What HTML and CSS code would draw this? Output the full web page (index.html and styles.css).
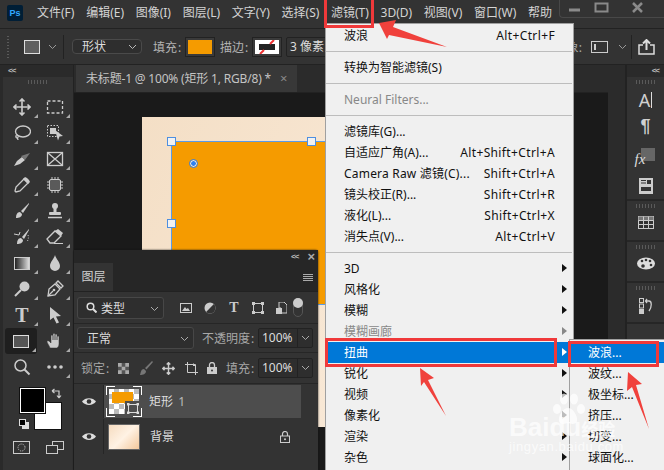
FILE: index.html
```html
<!DOCTYPE html>
<html lang="zh">
<head>
<meta charset="utf-8">
<title>Photoshop</title>
<link rel="stylesheet" href="styles.css">
</head>
<body>
<div class="app">
  <header class="menubar">
    <div class="pslogo">Ps</div>
    <nav class="menus">
      <span>文件(F)</span><span>编辑(E)</span><span>图像(I)</span><span>图层(L)</span><span>文字(Y)</span><span>选择(S)</span><span>滤镜(T)</span><span>3D(D)</span><span>视图(V)</span><span>窗口(W)</span><span>帮助</span>
    </nav>
    <div class="winbtns">
      <svg width="105" height="18" viewBox="0 0 105 18"><path d="M10 11h11" stroke="#8a8a8a" stroke-width="3"/><rect x="36.500" y="4.500" width="12" height="8" fill="none" stroke="#8a8a8a" stroke-width="2"/><path d="M74 4l9 9M83 4l-9 9" stroke="#8a8a8a" stroke-width="2.500"/></svg>
    </div>
  </header>

  <div class="options">
    <div class="grip-v"></div>
    <div class="tool-preset"></div>
    <svg class="chev" width="9" height="6" viewBox="0 0 9 6"><path d="M1 1l3.500 3.500L8 1" fill="none" stroke="#9a9a9a"/></svg>
    <div class="opt-div"></div>
    <div class="opt-select">形状<svg width="9" height="6" viewBox="0 0 9 6"><path d="M1 1l3.500 3.500L8 1" fill="none" stroke="#bbb"/></svg></div>
    <div class="opt-label">填充 :</div>
    <div class="swatch"><i class="fill-orange"></i></div>
    <div class="opt-label">描边 :</div>
    <div class="swatch"><svg width="24" height="14" viewBox="0 0 24 14"><rect width="24" height="14" fill="#fff"/><rect x="4" y="4" width="16" height="6" fill="#222"/><path d="M15 4l4-4M5 14l4-4" stroke="#e33" stroke-width="2"/></svg></div>
    <div class="opt-stroke">3 像素</div>
    <div class="opt-right">
      <span class="opt-frag">象:</span>
      <svg width="17" height="12" viewBox="0 0 17 12"><rect x=".5" y=".5" width="16" height="11" fill="none" stroke="#ccc"/><path d="M4 3v6" stroke="#ccc" stroke-width="2"/></svg>
      <svg class="chev2" width="9" height="6" viewBox="0 0 9 6"><path d="M1 1l3.500 3.500L8 1" fill="none" stroke="#9a9a9a"/></svg>
      <div class="opt-div"></div>
      <svg width="17" height="16" viewBox="0 0 17 16"><path d="M5 6H1v9h15V6h-4" fill="none" stroke="#ddd" stroke-width="1.500"/><path d="M8.500 11V1M5 4.500L8.500 1 12 4.500" fill="none" stroke="#ddd" stroke-width="2"/></svg>
    </div>
  </div>

  <div class="workspace">
    <aside class="toolbar">
      <div class="collapse-bar"><span>&lt;&lt;</span></div>
      <div class="grip-h"></div>
      <div class="tools">
        <div class="tool fly"><svg viewBox="0 0 18 18"><path d="M9 1v16M1 9h16M6.500 3.500L9 1l2.500 2.500M6.500 14.500L9 17l2.500-2.500M3.500 6.500L1 9l2.500 2.500M14.500 6.500L17 9l-2.500 2.500" fill="none" stroke="#ccc" stroke-width="1.600"/></svg></div>
        <div class="tool fly"><svg viewBox="0 0 18 18"><rect x="1.500" y="3" width="15" height="12" fill="none" stroke="#ccc" stroke-width="1.300" stroke-dasharray="3 2"/></svg></div>
        <div class="tool fly"><svg viewBox="0 0 18 18"><ellipse cx="10" cy="7.500" rx="7.500" ry="5.500" fill="none" stroke="#ccc" stroke-width="1.300"/><path d="M4 12c-1 2 1 2 1 4" fill="none" stroke="#ccc" stroke-width="1.300"/><circle cx="4" cy="12.500" r="1.500" fill="none" stroke="#ccc"/></svg></div>
        <div class="tool fly"><svg viewBox="0 0 18 18"><rect x="1.500" y="1.500" width="11" height="11" fill="none" stroke="#ccc" stroke-dasharray="1.500 1.500"/><rect x="4" y="4" width="6" height="6" fill="#ccc"/><path d="M9 6l8 6-3.500 .5-1.500 4z" fill="#ccc"/></svg></div>
        <div class="tool fly"><svg viewBox="0 0 18 18"><path d="M1 16l3-5 5-4 3 3-5 4z" fill="#ccc"/><path d="M8 6l9-3-5 7z" fill="#777"/></svg></div>
        <div class="tool fly"><svg viewBox="0 0 18 18"><rect x="1.500" y="2.500" width="15" height="13" fill="none" stroke="#ccc" stroke-width="1.300"/><path d="M2 3l14 12M16 3L2 15" stroke="#ccc" stroke-width="1.300"/></svg></div>
        <div class="tool fly"><svg viewBox="0 0 18 18"><path d="M11 3l4 4-8 8-4 1-1-1 1-4z" fill="none" stroke="#ccc" stroke-width="1.300"/><path d="M10 3l2-2 2 1 2 2 1 2-2 2z" fill="#ccc"/></svg></div>
        <div class="tool fly"><svg viewBox="0 0 18 18"><rect x="3.500" y="3.500" width="11" height="11" rx="1.500" fill="#5a5a5a" stroke="#ccc"/><path d="M6 1v2M9 1v2M12 1v2M6 15v2M9 15v2M12 15v2M1 6h2M1 9h2M1 12h2M15 6h2M15 9h2M15 12h2" stroke="#ccc"/></svg></div>
        <div class="tool fly"><svg viewBox="0 0 18 18"><path d="M16 1L8 9l2 2 6-9z" fill="#ccc"/><path d="M7 10c-3 0-4 3-4 6 3 0 6-1 6-4z" fill="#ccc"/></svg></div>
        <div class="tool fly"><svg viewBox="0 0 18 18"><circle cx="9" cy="4" r="3" fill="#ccc"/><rect x="7.500" y="6" width="3" height="4" fill="#ccc"/><rect x="3" y="10" width="12" height="3" rx="1" fill="#ccc"/><path d="M2 15.500h14" stroke="#ccc" stroke-width="1.500"/></svg></div>
        <div class="tool fly"><svg viewBox="0 0 18 18"><path d="M16 1L9 9l2 2 5-9z" fill="#ccc"/><path d="M8 10c-3 0-4 3-4 6 3 0 6-1 6-4z" fill="#ccc"/><path d="M1 6l5 1 1-3" fill="none" stroke="#ccc"/><path d="M15 7c1 3 0 5-1 7" fill="none" stroke="#ccc" stroke-dasharray="1 1.500"/></svg></div>
        <div class="tool fly"><svg viewBox="0 0 18 18"><path d="M1 11l8-8 6 5-7 7H4z" fill="none" stroke="#ccc" stroke-width="1.300"/><path d="M9 3l6 5 2-3-5-4z" fill="#ccc"/><path d="M8 15.500h9" stroke="#ccc"/></svg></div>
        <div class="tool fly"><div class="gradient-icon"></div></div>
        <div class="tool fly"><svg viewBox="0 0 18 18"><path d="M9 1c1 4 5 7 5 11a5 5 0 0 1-10 0c0-4 4-7 5-11z" fill="#ccc"/></svg></div>
        <div class="tool fly"><svg viewBox="0 0 18 18"><circle cx="11.500" cy="6.500" r="5" fill="#ccc"/><path d="M8 10l-6 6" stroke="#ccc" stroke-width="2"/></svg></div>
        <div class="tool fly"><svg viewBox="0 0 18 18"><path d="M2 16l1-7 6-5 5 5-5 6z" fill="none" stroke="#ccc" stroke-width="1.300"/><path d="M2 16l5-5M10 3l2-2 5 5-2 2z" fill="none" stroke="#ccc" stroke-width="1.300"/><circle cx="8" cy="10" r="1.300" fill="#ccc"/></svg></div>
        <div class="tool fly tool-t">T</div>
        <div class="tool fly"><svg viewBox="0 0 18 18"><path d="M4 1l11 9-5 .5 3 6-2.500 1-3-6L4 14z" fill="#ccc"/></svg></div>
        <div class="tool fly active"><div class="rect-icon"></div></div>
        <div class="tool fly"><svg viewBox="0 0 18 18"><path d="M4 16C3 13 1 11 1 9.500c0-1 1.500-1 2.500 0L5 11V4c0-1.300 2-1.300 2 0v4V2.500c0-1.300 2-1.300 2 0V8V3c0-1.300 2-1.300 2 0v5V5c0-1.300 2-1.300 2 0v7c0 2-1 3-2 4z" fill="#ccc" stroke="#333" stroke-width=".5"/></svg></div>
        <div class="tool"><svg viewBox="0 0 18 18"><circle cx="7.500" cy="7.500" r="5.500" fill="none" stroke="#ccc" stroke-width="1.500"/><path d="M11.500 11.500l5 5" stroke="#ccc" stroke-width="2"/></svg></div>
        <div class="tool fly"><svg viewBox="0 0 18 18"><circle cx="3" cy="9" r="1.800" fill="#ccc"/><circle cx="9" cy="9" r="1.800" fill="#ccc"/><circle cx="15" cy="9" r="1.800" fill="#ccc"/></svg></div>
      </div>
      <div class="colors">
        <div class="bg-color"></div>
        <div class="fg-color"></div>
        <svg class="swap" width="12" height="12" viewBox="0 0 12 12"><path d="M1 3h7v6M1 3l2.500-2M1 3l2.500 2M8 10l-2-2.500M8 10l2-2.500" fill="none" stroke="#ccc" stroke-width="1.200"/></svg>
        <div class="mini-colors"><i></i><b></b></div>
      </div>
      <div class="tool-bottom">
        <svg width="18" height="13" viewBox="0 0 18 13"><rect x=".5" y=".5" width="16" height="12" fill="none" stroke="#ccc"/><circle cx="8.500" cy="6.500" r="3.500" fill="none" stroke="#ccc" stroke-dasharray="1 1"/></svg>
        <svg class="screen-mode" width="18" height="13" viewBox="0 0 18 13"><rect x="6.500" y=".5" width="11" height="8" fill="#333" stroke="#ccc"/><rect x=".5" y="4.500" width="11" height="8" fill="#333" stroke="#ccc"/></svg>
      </div>
    </aside>

    <main class="doc">
      <div class="tabbar">
        <div class="doctab">未标题-1 @ 100% (矩形 1, RGB/8) *<span class="tabx">×</span></div>
      </div>
      <div class="view">
        <div class="canvas">
          <div class="shape">
            <i class="handle h-tl"></i><i class="handle h-tc"></i><i class="handle h-ml"></i>
            <i class="refpoint"></i>
          </div>
        </div>
      </div>
    </main>

    <div class="dock-strip"></div>

    <aside class="dock">
      <div class="collapse-bar right"><span>&lt;&lt;</span></div>
      <section class="dock-group first">
        <div class="grip-h"></div>
        <div class="dock-a">A<i></i></div>
        <div class="dock-para">¶</div>
        <div class="dock-fx"><i></i><em>fx</em></div>
        <svg width="14" height="16" viewBox="0 0 14 16"><rect width="14" height="16" fill="#ccc"/><rect x="2" y="2" width="5" height="1" fill="#333"/><rect x="2" y="4.500" width="5" height="1" fill="#333"/><rect x="8" y="2" width="4" height="4" fill="#333"/><rect x="2" y="9" width="10" height="4" fill="#333"/></svg>
      </section>
      <section class="dock-group">
        <div class="grip-h"></div>
        <svg width="16" height="13" viewBox="0 0 16 13"><rect x=".5" y=".5" width="15" height="12" fill="none" stroke="#ccc"/><rect x=".5" y=".5" width="15" height="4" fill="#777"/><path d="M.5 4.500h15M.5 8.500h15M5.500 .5v12M10.500 .5v12" stroke="#ccc"/></svg>
      </section>
      <section class="dock-group">
        <div class="grip-h"></div>
        <svg width="18" height="13" viewBox="0 0 18 13"><ellipse cx="9" cy="6.500" rx="9" ry="6" fill="#ddd"/><circle cx="5" cy="4" r="1.300" fill="#333"/><circle cx="9" cy="3" r="1.300" fill="#333"/><circle cx="13" cy="4" r="1.300" fill="#333"/><circle cx="14" cy="8" r="1.300" fill="#333"/><circle cx="6" cy="9" r="1.800" fill="#333"/></svg>
      </section>
      <section class="dock-group">
        <div class="grip-h"></div>
        <svg width="16" height="16" viewBox="0 0 16 16"><rect x="1.500" y=".5" width="4" height="4" fill="none" stroke="#ccc"/><rect x="1.500" y="6" width="4" height="4" fill="none" stroke="#ccc"/><rect x="1" y="11" width="5" height="5" fill="#ccc"/><path d="M9 1l-1.500 2L9 5M8 3h3c3 0 3 6 0 10" fill="none" stroke="#ccc" stroke-width="1.300"/></svg>
      </section>
    </aside>
  </div>

  <!-- floating layers panel -->
  <div class="layers">
    <div class="lp-head"><span class="lp-coll">&lt;&lt;</span><span class="lp-x">×</span></div>
    <div class="lp-tabs"><div class="lp-tab">图层</div><div class="lp-menu"><i></i><i></i><i></i><i></i></div></div>
    <div class="lp-row lp-filter">
      <div class="sel sel-filter">
        <svg width="11" height="11" viewBox="0 0 11 11"><circle cx="4.500" cy="4.500" r="3.300" fill="none" stroke="#ddd" stroke-width="1.500"/><path d="M7 7l3.500 3.500" stroke="#ddd" stroke-width="2"/></svg>
        <span>类型</span>
        <svg class="sel-chev" width="9" height="6" viewBox="0 0 9 6"><path d="M1 1l3.500 3.500L8 1" fill="none" stroke="#aaa"/></svg>
      </div>
      <div class="filter-icons">
        <svg width="12" height="10" viewBox="0 0 12 10"><rect x=".5" y=".5" width="11" height="9" fill="none" stroke="#ccc"/><path d="M2 8l3-4 1.500 2 1.500-1 2 3z" fill="#ccc"/></svg>
        <svg width="12" height="12" viewBox="0 0 12 12"><circle cx="6" cy="6" r="5.500" fill="#ccc"/><path d="M9.900 2.100A5.500 5.500 0 0 1 2.100 9.900z" fill="#333"/></svg>
        <span class="filter-t">T</span>
        <svg width="12" height="12" viewBox="0 0 12 12"><rect x="1.500" y="1.500" width="9" height="9" fill="none" stroke="#ccc"/><rect x="0" y="0" width="3" height="3" fill="#ccc"/><rect x="9" y="0" width="3" height="3" fill="#ccc"/><rect x="0" y="9" width="3" height="3" fill="#ccc"/><rect x="9" y="9" width="3" height="3" fill="#ccc"/></svg>
        <svg width="11" height="12" viewBox="0 0 11 12"><path d="M3 0h5l3 3v8H5V6H3z" fill="none" stroke="#ccc"/><rect x="0" y="6" width="6" height="6" fill="#ccc"/></svg>
      </div>
      <div class="toggle"></div>
    </div>
    <div class="lp-row lp-blend">
      <div class="sel sel-blend"><span>正常</span><svg class="sel-chev" width="9" height="6" viewBox="0 0 9 6"><path d="M1 1l3.500 3.500L8 1" fill="none" stroke="#aaa"/></svg></div>
      <div class="lp-label">不透明度 :</div>
      <div class="pct"><span>100%</span><b><svg width="9" height="6" viewBox="0 0 9 6"><path d="M1 1l3.500 3.500L8 1" fill="none" stroke="#aaa"/></svg></b></div>
    </div>
    <div class="lp-row lp-lock">
      <div class="lp-label lock-label">锁定 :</div>
      <div class="lock-icons">
        <svg width="11" height="11" viewBox="0 0 11 11"><rect width="11" height="11" fill="#555"/><path d="M0 0h3.700v3.700H0zM7.300 0H11v3.700H7.300zM3.700 3.700h3.600v3.600H3.700zM0 7.300h3.700V11H0zM7.300 7.300H11V11H7.300z" fill="#aaa"/></svg>
        <svg width="14" height="14" viewBox="0 0 14 14"><path d="M13 0L6 7l1.500 1.500L14 1zM5 8c-3 0-3 3-4 6 3 0 6-1 6-4z" fill="#777"/></svg>
        <svg width="13" height="13" viewBox="0 0 18 18"><path d="M9 1v16M1 9h16M6.500 3.500L9 1l2.500 2.500M6.500 14.500L9 17l2.500-2.500M3.500 6.500L1 9l2.500 2.500M14.500 6.500L17 9l-2.500 2.500" fill="none" stroke="#ccc" stroke-width="2"/></svg>
        <svg width="13" height="13" viewBox="0 0 13 13"><path d="M2.500 0v10.500H13M0 2.500h10.500V13" fill="none" stroke="#ccc"/><path d="M8 1l3 3H8z" fill="#ccc"/></svg>
        <svg width="10" height="12" viewBox="0 0 10 12"><rect y="5" width="10" height="7" fill="#ccc"/><path d="M2.500 5V3a2.500 2.500 0 0 1 5 0v2" fill="none" stroke="#ccc" stroke-width="1.300"/><circle cx="5" cy="8.500" r="1" fill="#333"/></svg>
      </div>
      <div class="lp-label fill-label">填充 :</div>
      <div class="pct"><span>100%</span><b><svg width="9" height="6" viewBox="0 0 9 6"><path d="M1 1l3.500 3.500L8 1" fill="none" stroke="#aaa"/></svg></b></div>
    </div>
    <div class="layer-list">
      <div class="layer selected">
        <div class="eye"><svg width="14" height="9" viewBox="0 0 14 9"><path d="M0 4.500C3 0 11 0 14 4.500 11 9 3 9 0 4.500z" fill="#ddd"/><circle cx="7" cy="4.500" r="2.300" fill="#333"/></svg></div>
        <div class="thumb thumb-shape">
          <i class="thumb-orange"></i>
          <i class="thumb-badge"><svg width="12" height="11" viewBox="0 0 12 11"><rect x="1.500" y="1.500" width="9" height="8" fill="none" stroke="#ddd"/><rect width="2.500" height="2.500" fill="#ddd"/><rect x="9.500" width="2.500" height="2.500" fill="#ddd"/><rect y="8.500" width="2.500" height="2.500" fill="#ddd"/><rect x="9.500" y="8.500" width="2.500" height="2.500" fill="#ddd"/></svg></i>
        </div>
        <div class="layer-name">矩形 <span class="name-num">1</span></div>
      </div>
      <div class="layer">
        <div class="eye"><svg width="14" height="9" viewBox="0 0 14 9"><path d="M0 4.500C3 0 11 0 14 4.500 11 9 3 9 0 4.500z" fill="#ddd"/><circle cx="7" cy="4.500" r="2.300" fill="#333"/></svg></div>
        <div class="thumb thumb-bg"></div>
        <div class="layer-name">背景</div>
        <svg class="layer-lock" width="10" height="12" viewBox="0 0 10 12"><rect x=".5" y="5" width="9" height="6.500" fill="none" stroke="#ccc"/><path d="M2.500 5V3a2.500 2.500 0 0 1 5 0v2" fill="none" stroke="#ccc" stroke-width="1.200"/><circle cx="5" cy="8.200" r="1" fill="#ccc"/></svg>
      </div>
    </div>
  </div>

  <!-- filter menu -->
  <div class="menu">
    <div class="mi"><span>波浪</span><span>Alt+Ctrl+F</span></div>
    <div class="sep"></div>
    <div class="mi"><span>转换为智能滤镜(S)</span></div>
    <div class="sep"></div>
    <div class="mi disabled"><span>Neural Filters...</span></div>
    <div class="sep"></div>
    <div class="mi"><span>滤镜库(G)...</span></div>
    <div class="mi"><span>自适应广角(A)...</span><span>Alt+Shift+Ctrl+A</span></div>
    <div class="mi"><span class="wide">Camera Raw 滤镜(C)...</span><span>Shift+Ctrl+A</span></div>
    <div class="mi"><span>镜头校正(R)...</span><span>Shift+Ctrl+R</span></div>
    <div class="mi"><span>液化(L)...</span><span>Shift+Ctrl+X</span></div>
    <div class="mi"><span>消失点(V)...</span><span>Alt+Ctrl+V</span></div>
    <div class="sep"></div>
    <div class="mi sub"><span>3D</span></div>
    <div class="mi sub"><span>风格化</span></div>
    <div class="mi sub"><span>模糊</span></div>
    <div class="mi sub disabled"><span>模糊画廊</span></div>
    <div class="mi sub hot"><span>扭曲</span></div>
    <div class="mi sub"><span>锐化</span></div>
    <div class="mi sub"><span>视频</span></div>
    <div class="mi sub"><span>像素化</span></div>
    <div class="mi sub"><span>渲染</span></div>
    <div class="mi sub"><span>杂色</span></div>
  </div>

  <div class="submenu">
    <div class="mi hot"><span>波浪...</span></div>
    <div class="mi"><span>波纹...</span></div>
    <div class="mi"><span>极坐标...</span></div>
    <div class="mi"><span>挤压...</span></div>
    <div class="mi"><span>切变...</span></div>
    <div class="mi"><span>球面化...</span></div>
  </div>

  <!-- annotations -->
  <div class="mark mark-top"></div>
  <div class="mark mark-distort"></div>
  <div class="mark mark-wave"></div>
  <svg class="arrows" width="664" height="470" viewBox="0 0 664 470">
    <path d="M379 23L396 20 393 27 447 47 389 35 387 39z" fill="#f0413c"/>
    <path d="M420 368L434 378 428 380 446 416 424 382 421 386z" fill="#f0413c"/>
    <path d="M628 372L642 384 636 385 649 429 632 387 627 391z" fill="#f0413c"/>
  </svg>

  <div class="watermark">
    <svg class="paw" width="36" height="34" viewBox="0 0 36 34"><ellipse cx="7" cy="16" rx="4" ry="5"/><ellipse cx="14" cy="6" rx="4" ry="5.500"/><ellipse cx="24" cy="6" rx="4" ry="5.500"/><ellipse cx="31" cy="16" rx="4" ry="5"/><path d="M18 15c-5 0-10 8-9 13 1 4 6 3 9 2 3 1 8 2 9-2 1-5-4-13-9-13z"/></svg>
    <div class="wm-big">Baidu<span>经验</span></div>
    <div class="wm-small">jingyan.baidu.com</div>
  </div>
</div>
</body>
</html>
```
FILE: styles.css
```css
* { box-sizing: border-box; }
html, body { margin: 0; padding: 0; }
body { font-family: "Noto Sans", "Noto Sans CJK SC", sans-serif; font-size: 12px; color: #ccc; background: #333; }
.app { position: relative; width: 664px; height: 470px; overflow: hidden; display: flex; flex-direction: column; background: #333; }

/* menu bar */
.menubar { height: 28px; flex: none; display: flex; align-items: center; background: #333; position: relative; }
.pslogo { width: 16px; height: 16px; margin-left: 7px; margin-top: -3px; border-radius: 2px; background: #001e36; color: #31a8ff; font: 700 9px/16px "Liberation Sans", sans-serif; text-align: center; flex: none; }
.menus { display: flex; margin-left: 14px; margin-top: -3px; gap: 11.700px; color: #d4d4d4; white-space: nowrap; }
.menus span { line-height: 16px; }
.winbtns { position: absolute; right: 0; top: 0; height: 18px; width: 105px; border: 1px solid #484848; border-top: 0; border-right: 0; border-radius: 0 0 0 4px; }
.winbtns svg { display: block; margin: -1px; }

/* options bar */
.options { height: 37px; flex: none; display: flex; align-items: center; border-top: 1px solid #222; border-bottom: 1px solid #222; padding-left: 7px; }
.grip-v { width: 2px; height: 22px; background: repeating-linear-gradient(#5a5a5a 0 1px, transparent 1px 3px); }
.tool-preset { width: 16px; height: 14px; margin-left: 15px; background: #5f5f5f; border: 1px solid #ddd; }
.chev { margin-left: 8px; }
.opt-div { width: 1px; height: 24px; background: #222; margin-left: 6px; flex: none; }
.opt-select { width: 70px; height: 15px; margin-left: 8px; border: 1px solid #4a4a4a; border-radius: 4px; display: flex; align-items: center; justify-content: space-between; padding: 0 4px 0 9px; line-height: 13px; color: #ddd; background: #2e2e2e; }
.opt-label { margin-left: 11px; color: #b4b4b4; white-space: nowrap; width: 29px; word-spacing: -2px; }
.swatch { width: 30px; height: 20px; margin-left: 3px; padding: 2px; border: 1px solid #222; background: #3a3a3a; display: flex; align-items: center; justify-content: center; flex: none; }
.swatch svg { display: block; }
.fill-orange { display: block; width: 24px; height: 14px; background: #f59b00; }
.opt-label + .swatch + .opt-label { margin-left: 5px; }
.opt-stroke { margin-left: 4px; height: 20px; width: 60px; border: 1px solid #222; border-radius: 2px; line-height: 18px; padding-left: 3px; color: #ddd; white-space: nowrap; font-size: 12px; flex: none; }
.opt-right { margin-left: auto; display: flex; align-items: center; padding-right: 9px; }
.opt-right .opt-frag { color: #aaa; margin-right: 9px; }
.chev2 { margin-left: 10px; }
.opt-right .opt-div { margin: 0 6px 0 4px; }

/* workspace */
.workspace { flex: 1; display: flex; min-height: 0; background: #222; }
.toolbar { width: 74px; flex: none; background: #333; border-left: 3px solid #2a2a2a; border-right: 1px solid #222; }
.collapse-bar { height: 12px; background: #2a2a2a; color: #bbb; font: 700 8px/12px "Liberation Sans", sans-serif; letter-spacing: -1px; padding-left: 5px; }
.collapse-bar.right { text-align: right; padding-right: 5px; }
.grip-h { width: 20px; height: 4px; margin: 3px auto 0; background: repeating-linear-gradient(90deg, #5a5a5a 0 1px, transparent 1px 3px); flex: none; }
.tools { display: grid; grid-template-columns: 34px 32px; grid-auto-rows: 26px; margin: 10px 0 0 2px; }
.tool { position: relative; display: flex; align-items: center; justify-content: center; }
.tool svg { width: 18px; height: 18px; display: block; }
.tool.fly::after { content: ""; position: absolute; right: 1px; bottom: 2px; border: 2px solid transparent; border-right-color: #aaa; border-bottom-color: #aaa; }
.tool.active { background: #1f1f1f; border-radius: 3px; margin-right: 2px; }
.rect-icon { width: 16px; height: 13px; border: 1px solid #ddd; background: #555; }
.gradient-icon { width: 16px; height: 13px; border: 1px solid #ccc; background: linear-gradient(90deg, #222, #ddd); }
.tool-t { font: 700 20px/26px "Liberation Serif", serif; color: #ccc; }
.colors { position: relative; height: 44px; margin-top: 8px; }
.fg-color { position: absolute; left: 17px; top: 0; width: 25px; height: 25px; background: #000; border: 1px solid #fff; outline: 1px solid #111; }
.bg-color { position: absolute; left: 32px; top: 15px; width: 26px; height: 26px; background: #fff; outline: 1px solid #111; }
.swap { position: absolute; left: 48px; top: 0; }
.mini-colors { position: absolute; left: 16px; top: 31px; width: 10px; height: 10px; }
.mini-colors i { position: absolute; left: 0; top: 0; width: 7px; height: 7px; background: #000; border: 1px solid #ddd; z-index: 1; }
.mini-colors b { position: absolute; left: 3px; top: 3px; width: 7px; height: 7px; background: #ddd; }
.tool-bottom { display: flex; gap: 15px; padding-left: 10px; margin-top: 9px; align-items: center; }

/* document */
.doc { flex: 1; min-width: 0; display: flex; flex-direction: column; background: #1a1a1a; }
.tabbar { height: 28px; flex: none; background: #2b2b2b; padding-left: 2px; border-bottom: 1px solid #222; }
.doctab { width: 221px; height: 27px; background: #383838; color: #c4c4c4; line-height: 27px; padding-left: 10px; white-space: nowrap; font-size: 12px; letter-spacing: -.18px; }
.tabx { margin-left: 9px; color: #888; font-size: 13px; }
.view { flex: 1; padding: 24px 0 0 68px; }
.canvas { width: 400px; height: 310px; padding: 24px 0 0 29px; background: linear-gradient(115deg, #f4dfc6, #fbeee0); }
.shape { position: relative; width: 280px; height: 164px; background: #f59b00; border: 1px solid #5b9be8; }
.handle { position: absolute; width: 9px; height: 9px; background: #f2f2f2; border: 1px solid #4d8fe0; }
.h-tl { left: -5px; top: -5px; }
.h-tc { left: 135px; top: -5px; }
.h-ml { left: -5px; top: 77px; }
.refpoint { position: absolute; left: 18px; top: 18px; width: 7px; height: 7px; border-radius: 50%; background: #2f80ed; border: 1px solid #fff; outline: 1px solid #2f80ed; }

.dock-strip { width: 18px; flex: none; background: #2b2b2b; border-right: 1px solid #222; }
.dock { width: 38px; flex: none; background: #333; border-left: 1px solid #222; }
.dock-group { display: flex; flex-direction: column; align-items: center; height: 41px; border-bottom: 2px solid #262626; gap: 8px; }
.dock-group.first { height: 124px; gap: 0; }
.dock-a { color: #d0d0d0; font-size: 18px; line-height: 24px; margin-top: 4px; display: flex; align-items: center; height: 24px; }
.dock-a i { width: 1px; height: 16px; background: #ddd; margin-left: 1px; }
.dock-para { color: #d0d0d0; font: 700 18px/24px "Liberation Sans", sans-serif; margin-top: 2px; }
.dock-fx { position: relative; width: 18px; height: 24px; margin-top: 10px; }
.dock-fx i { position: absolute; right: 0; top: 0; width: 14px; height: 13px; background: #666; }
.dock-fx em { position: absolute; left: -2px; top: 2px; color: #ddd; font: italic 400 15px/18px "Liberation Serif", serif; }
.dock-group.first > svg { margin-top: 6px; }

/* layers panel */
.layers { position: absolute; left: 74px; top: 250px; width: 244px; height: 220px; background: #333; border-radius: 3px 3px 0 0; box-shadow: 0 0 2px #111; display: flex; flex-direction: column; }
.lp-head { height: 13px; flex: none; background: #262626; position: relative; color: #bbb; display: flex; justify-content: flex-end; align-items: center; gap: 9px; padding-right: 3px; font: 700 8px/13px "Liberation Sans", sans-serif; }
.lp-coll { letter-spacing: -1px; }
.lp-x { font-size: 13px; color: #aaa; }
.lp-tabs { height: 29px; flex: none; background: #262626; display: flex; justify-content: space-between; align-items: stretch; border-bottom: 1px solid #222; }
.lp-tab { width: 39px; background: #333; color: #d0d0d0; text-align: center; line-height: 27px; }
.lp-menu { display: flex; flex-direction: column; gap: 1px; justify-content: center; margin-right: 5px; }
.lp-menu i { display: block; width: 10px; height: 1px; background: #aaa; }
.lp-row { display: flex; align-items: center; flex: none; padding-left: 3px; border-bottom: 1px solid #262626; }
.lp-filter { height: 32px; }
.lp-blend { height: 29px; }
.lp-lock { height: 31px; }
.sel { position: relative; height: 22px; border: 1px solid #474747; border-radius: 3px; background: #2e2e2e; display: flex; align-items: center; color: #ddd; flex: none; }
.sel-filter { width: 87px; padding-left: 8px; gap: 4px; }
.sel-blend { width: 117px; padding-left: 9px; }
.sel-chev { position: absolute; right: 4px; top: 8px; }
.filter-icons { display: flex; align-items: center; gap: 12px; margin-left: 16px; width: 112px; }
.filter-t { font: 700 14px/14px "Liberation Serif", serif; color: #ccc; width: 12px; text-align: center; }
.toggle { width: 10px; height: 19px; border: 1px solid #555; border-radius: 5px; position: relative; margin-left: 1px; flex: none; }
.toggle::before { content: ""; position: absolute; left: -1px; top: -1px; width: 10px; height: 10px; border-radius: 50%; background: #ccc; }
.lp-label { color: #a8a8a8; white-space: nowrap; word-spacing: -2px; }
.lp-blend .lp-label { margin-left: 8px; width: 56px; }
.pct { width: 55px; height: 20px; border: 1px solid #222; border-radius: 2px; display: flex; align-items: center; flex: none; color: #ddd; background: #2e2e2e; }
.pct span { flex: 1; padding-left: 3px; font-size: 12px; line-height: 18px; }
.pct b { width: 15px; height: 18px; border-left: 1px solid #222; display: flex; align-items: center; justify-content: center; }
.lock-label { margin-left: 4px; width: 30px; }
.lock-icons { display: flex; align-items: center; gap: 9.500px; margin-left: 7px; width: 108px; flex: none; }
.fill-label { width: 32px; flex: none; }
.layer-list { width: 227px; flex: 1; display: flex; flex-direction: column; align-self: flex-start; padding-top: 1px; }
.layer { height: 35px; flex: none; display: flex; align-items: center; background: #333; position: relative; }
.layer.selected { height: 33px; background: #4d4d4d; margin-bottom: 1px; }
.eye { width: 30px; height: 100%; display: flex; align-items: center; justify-content: center; background: #333; border-right: 1px solid #262626; flex: none; }
.thumb { position: relative; width: 32px; height: 26px; margin-left: 4px; flex: none; }
.thumb-shape { width: 30px; height: 25px; margin-left: 5px; background: conic-gradient(#bbb 25%, #fff 0 50%, #bbb 0 75%, #fff 0) 0 0 / 10px 10px; }
.thumb-shape::before { content: ""; position: absolute; inset: -3px; background:
  linear-gradient(#fff,#fff) 0 0 / 9px 1px no-repeat, linear-gradient(#fff,#fff) 0 0 / 1px 9px no-repeat,
  linear-gradient(#fff,#fff) 100% 0 / 9px 1px no-repeat, linear-gradient(#fff,#fff) 100% 0 / 1px 9px no-repeat,
  linear-gradient(#fff,#fff) 0 100% / 9px 1px no-repeat, linear-gradient(#fff,#fff) 0 100% / 1px 9px no-repeat,
  linear-gradient(#fff,#fff) 100% 100% / 9px 1px no-repeat, linear-gradient(#fff,#fff) 100% 100% / 1px 9px no-repeat; }
.thumb-orange { position: absolute; left: 3px; top: 3px; width: 21px; height: 11px; background: #f59b00; }
.thumb-badge { position: absolute; right: 0; bottom: 0; width: 14px; height: 13px; background: #4d4d4d; display: flex; align-items: center; justify-content: center; padding: 1px 0 0 1px; }
.thumb-bg { border: 1px solid #666; background: linear-gradient(135deg, #f6dcc0, #fff2e4 50%, #f3c89c); }
.layer-name { margin-left: 10px; color: #ddd; line-height: 16px; word-spacing: 2px; }
.name-num { color: #bbb; }
.layer-lock { position: absolute; left: 206px; top: 12px; }

/* menus */
.menu, .submenu { position: absolute; background: #f0f0f0; color: #111; border: 1px solid #a0a0a0; font-size: 12px; }
.menu { left: 325px; top: 23px; width: 249px; height: 460px; padding-top: 1px; }
.submenu { left: 569px; top: 339px; width: 120px; height: 140px; padding-top: 2px; }
.mi { height: 21px; line-height: 21px; padding: 0 18px; display: flex; justify-content: space-between; white-space: nowrap; position: relative; }
.mi span + span { letter-spacing: .37px; }
.mi .wide { letter-spacing: .2px; }
.submenu .mi { justify-content: flex-start; }
.mi.disabled { color: #888; }
.mi.hot { background: #0078d7; color: #fff; }
.mi.sub::after { content: ""; position: absolute; left: 236px; top: 6px; border-left: 5px solid #111; border-top: 4.500px solid transparent; border-bottom: 4.500px solid transparent; }
.mi.sub.disabled::after { border-left-color: #888; }
.mi.sub.hot::after { border-left-color: #fff; }
.sep { height: 1px; background: #bdbdbd; margin: 5px 1px 5px 0; }

/* annotations */
.mark { position: absolute; border: 3px solid #f0393a; }
.mark-top { left: 324px; top: 0; width: 50px; height: 28px; border-top: 0; }
.mark-distort { left: 325px; top: 338px; width: 232px; height: 29px; }
.mark-wave { left: 568px; top: 341px; width: 91px; height: 26px; }
.arrows { position: absolute; left: 0; top: 0; }

/* watermark */
.watermark { position: absolute; left: 509px; top: 393px; width: 130px; color: rgba(255,255,255,.72); }
.paw { position: absolute; left: 41px; top: 0; fill: rgba(255,255,255,.72); }
.wm-big { position: absolute; left: 0; top: 21px; font: 700 26px/26px "Liberation Sans", sans-serif; white-space: nowrap; }
.wm-big span { font: 700 17px/26px "Noto Sans CJK SC", sans-serif; }
.wm-small { position: absolute; left: 0; top: 46px; font: 13px/16px "Liberation Sans", sans-serif; letter-spacing: .6px; white-space: nowrap; }
```
